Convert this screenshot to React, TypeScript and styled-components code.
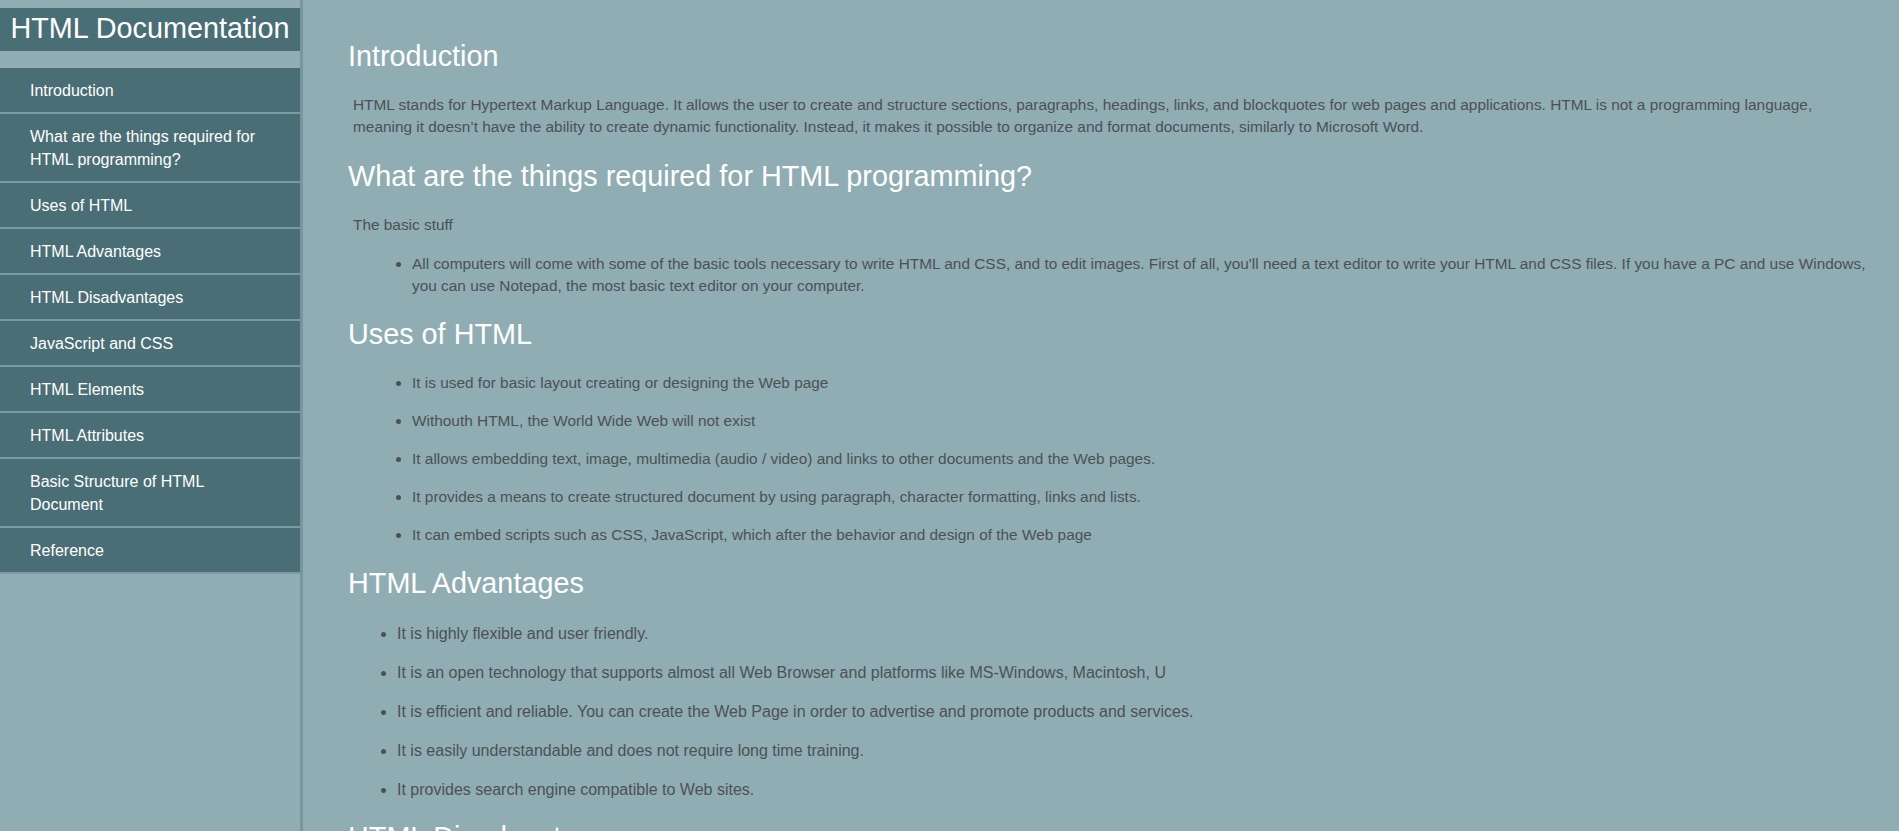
import React from "react";
import styled, { createGlobalStyle } from "styled-components";

const GlobalStyle = createGlobalStyle`
  html, body {
    margin: 0;
    padding: 0;
    height: 100%;
    overflow: hidden;
  }
  body {
    background: #8fadb3;
    font-family: "Liberation Sans", Arial, sans-serif;
  }
`;

const Page = styled.div`
  display: flex;
  height: 100vh;
  background: #8fadb3;
  overflow: hidden;
`;

const Sidebar = styled.nav`
  flex: 0 0 300px;
  width: 300px;
  height: 100vh;
  border-right: 3px solid #77969e;
  background: #8fadb3;
  display: flex;
  flex-direction: column;
`;

const SideHeader = styled.header`
  margin-top: 8px;
  padding-bottom: 2px;
  background: #4a6e76;
  color: #ffffff;
  font-size: 28.8px;
  line-height: 41px;
  font-weight: 400;
  text-align: center;
  white-space: nowrap;
`;

const NavList = styled.ul`
  list-style: none;
  margin: 17px 0 0;
  padding: 0;
  display: flex;
  flex-direction: column;
`;

const NavItem = styled.li`
  background: #4a6e76;
  border-bottom: 2px solid #7b9ba2;
`;

const NavLink = styled.a`
  display: block;
  padding: 10.5px 31px 10.5px 30px;
  color: #ffffff;
  font-size: 16px;
  line-height: 23px;
  text-decoration: none;
`;

const Main = styled.main`
  flex: 1;
  min-width: 0;
  height: 100vh;
  overflow-y: auto;
  scrollbar-width: none;
  padding: 40px 31px 40px 45px;
  box-sizing: border-box;
  &::-webkit-scrollbar {
    display: none;
  }
`;

const Section = styled.section`
  display: flex;
  flex-direction: column;
`;

const Heading = styled.h2`
  margin: 0 0 21px;
  color: #ffffff;
  font-size: 28.8px;
  line-height: 33px;
  font-weight: 400;
`;

const Para = styled.p<{ $after: number }>`
  margin: 0 0 ${(p) => p.$after}px 5px;
  color: #4d5155;
  font-size: 15.4px;
  line-height: 22px;
`;

const List = styled.ul<{
  $indent: number;
  $gap: number;
  $before: number;
  $after: number;
  $size: number;
  $line: number;
}>`
  margin: ${(p) => p.$before}px 0 ${(p) => p.$after}px;
  padding: 0 0 0 ${(p) => p.$indent}px;
  color: #4d5155;
  font-size: ${(p) => p.$size}px;
  line-height: ${(p) => p.$line}px;
  list-style: disc outside;

  & > li + li {
    margin-top: ${(p) => p.$gap}px;
  }
`;

const Item = styled.li``;

const navItems = [
  "Introduction",
  "What are the things required for HTML programming?",
  "Uses of HTML",
  "HTML Advantages",
  "HTML Disadvantages",
  "JavaScript and CSS",
  "HTML Elements",
  "HTML Attributes",
  "Basic Structure of HTML Document",
  "Reference",
];

const uses = [
  "It is used for basic layout creating or designing the Web page",
  "Withouth HTML, the World Wide Web will not exist",
  "It allows embedding text, image, multimedia (audio / video) and links to other documents and the Web pages.",
  "It provides a means to create structured document by using paragraph, character formatting, links and lists.",
  "It can embed scripts such as CSS, JavaScript, which after the behavior and design of the Web page",
];

const advantages = [
  "It is highly flexible and user friendly.",
  "It is an open technology that supports almost all Web Browser and platforms like MS-Windows, Macintosh, U",
  "It is efficient and reliable. You can create the Web Page in order to advertise and promote products and services.",
  "It is easily understandable and does not require long time training.",
  "It provides search engine compatible to Web sites.",
];

const disadvantages = [
  "It can create only static and plain pages so if we need dynamic pages then HTML is not useful.",
  "Need to write lot of code for making simple webpage.",
  "Security features are not good in HTML.",
  "If we need to write long code for making a webpage then it produces some complexity.",
];

export default function App() {
  return (
    <>
      <GlobalStyle />
      <Page>
        <Sidebar id="navbar">
          <SideHeader>HTML Documentation</SideHeader>
          <NavList>
            {navItems.map((t) => (
              <NavItem key={t}>
                <NavLink href={`#${t.replace(/[^A-Za-z ]/g, "").replace(/ /g, "_")}`}>{t}</NavLink>
              </NavItem>
            ))}
          </NavList>
        </Sidebar>
        <Main id="main-doc">
          <Section id="Introduction">
            <Heading>Introduction</Heading>
            <Para $after={22}>
              HTML stands for Hypertext Markup Language. It allows the user to create and structure sections,
              paragraphs, headings, links, and blockquotes for web pages and applications. HTML is not a programming
              language, meaning it doesn’t have the ability to create dynamic functionality. Instead, it makes it
              possible to organize and format documents, similarly to Microsoft Word.
            </Para>
          </Section>
          <Section id="What_are_the_things_required_for_HTML_programming">
            <Heading>What are the things required for HTML programming?</Heading>
            <Para $after={17}>The basic stuff</Para>
            <List $indent={64} $gap={16} $before={0} $after={21} $size={15.4} $line={22}>
              <Item>
                All computers will come with some of the basic tools necessary to write HTML and CSS, and to edit
                images. First of all, you'll need a text editor to write your HTML and CSS files. If you have a PC and
                use Windows, you can use Notepad, the most basic text editor on your computer.
              </Item>
            </List>
          </Section>
          <Section id="Uses_of_HTML">
            <Heading>Uses of HTML</Heading>
            <List $indent={64} $gap={16} $before={0} $after={21} $size={15.4} $line={22}>
              {uses.map((u) => (
                <Item key={u}>{u}</Item>
              ))}
            </List>
          </Section>
          <Section id="HTML_Advantages">
            <Heading>HTML Advantages</Heading>
            <List $indent={49} $gap={16} $before={1} $after={20} $size={16} $line={23}>
              {advantages.map((u) => (
                <Item key={u}>{u}</Item>
              ))}
            </List>
          </Section>
          <Section id="HTML_Disadvantages">
            <Heading>HTML Disadvantages</Heading>
            <List $indent={49} $gap={16} $before={1} $after={20} $size={16} $line={23}>
              {disadvantages.map((u) => (
                <Item key={u}>{u}</Item>
              ))}
            </List>
          </Section>
        </Main>
      </Page>
    </>
  );
}
